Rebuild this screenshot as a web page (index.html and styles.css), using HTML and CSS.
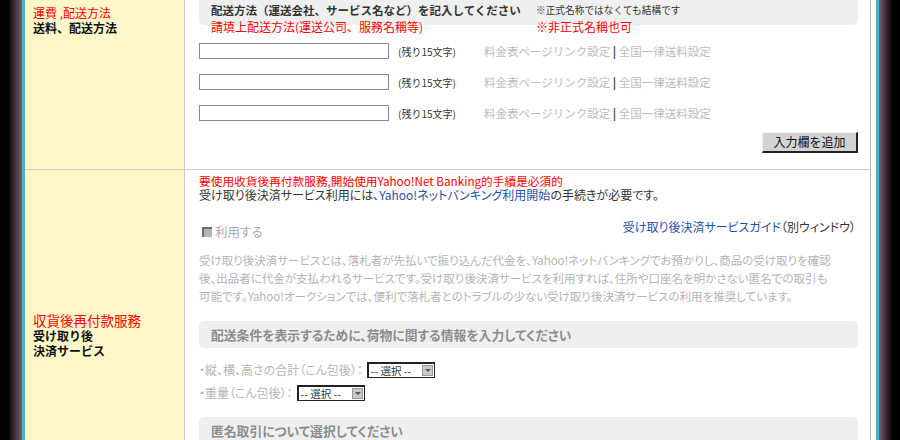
FILE: index.html
```html
<!DOCTYPE html>
<html lang="ja">
<head>
<meta charset="utf-8">
<link rel="stylesheet" href="styles.css">
</head>
<body>
<div class="edge-l"></div>
<div class="cyan"></div>
<div class="main">
  <div class="row row1">
    <div class="label l1">
      <div class="red">運費 ,配送方法</div>
      <div class="bold">送料、配送方法</div>
    </div>
    <div class="content c1">
      <div class="hdr">
        <span class="hdr-title">配送方法（運送会社、サービス名など）を記入してください</span>
        <span class="hdr-note">※正式名称ではなくても結構です</span>
      </div>
      <div class="anno">
        <span class="anno-a">請填上配送方法(運送公司、服務名稱等)</span>
        <span class="anno-b">※非正式名稱也可</span>
      </div>
      <div class="inputs">
        <div class="in-row"><span class="field"></span><span class="remain">(残り15文字)</span><span class="links">料金表ページリンク設定 <b class="sep">|</b> 全国一律送料設定</span></div>
        <div class="in-row"><span class="field"></span><span class="remain">(残り15文字)</span><span class="links">料金表ページリンク設定 <b class="sep">|</b> 全国一律送料設定</span></div>
        <div class="in-row"><span class="field"></span><span class="remain">(残り15文字)</span><span class="links">料金表ページリンク設定 <b class="sep">|</b> 全国一律送料設定</span></div>
      </div>
      <div class="btn-row"><span class="btn">入力欄を追加</span></div>
    </div>
  </div>
  <div class="row row2">
    <div class="label l2">
      <div class="red big">収貨後再付款服務</div>
      <div class="bold">受け取り後</div>
      <div class="bold">決済サービス</div>
    </div>
    <div class="content c2">
      <div class="red r2">要使用收貨後再付款服務,開始使用Yahoo!Net Banking的手續是必須的</div>
      <div class="dark">受け取り後決済サービス利用には、<span class="blue">Yahoo!ネットバンキング利用開始</span>の手続きが必要です。</div>
      <div class="use-row">
        <span class="use"><span class="cb"></span>利用する</span>
        <span class="guide"><span class="blue">受け取り後決済サービスガイド</span>（別ウィンドウ）</span>
      </div>
      <p class="desc">受け取り後決済サービスとは、落札者が先払いで振り込んだ代金を、Yahoo!ネットバンキングでお預かりし、商品の受け取りを確認<br>後、出品者に代金が支払われるサービスです。受け取り後決済サービスを利用すれば、住所や口座名を明かさない匿名での取引も<br>可能です。Yahoo!オークションでは、便利で落札者とのトラブルの少ない受け取り後決済サービスの利用を推奨しています。</p>
      <div class="box">配送条件を表示するために、荷物に関する情報を入力してください</div>
      <div class="sel-row first">・縦、横、高さの合計（こん包後）：<span class="sel"><span class="sel-t">-- 選択 --</span><span class="arrow"></span></span></div>
      <div class="sel-row">・重量（こん包後）：<span class="sel"><span class="sel-t">-- 選択 --</span><span class="arrow"></span></span></div>
      <div class="box box3">匿名取引について選択してください</div>
    </div>
  </div>
</div>
<div class="gap"></div>
<div class="cyan"></div>
<div class="edge-r"></div>
</body>
</html>
```

FILE: styles.css
```css
html, body {
  margin: 0;
  padding: 0;
}
body {
  width: 900px;
  height: 440px;
  overflow: hidden;
  display: flex;
  background: #fff;
  font-family: "Noto Sans CJK JP", "Liberation Sans", sans-serif;
  font-size: 12px;
  color: #333;
}
.edge-l {
  width: 22px;
  flex: none;
  background: linear-gradient(to right, #000 0, #000 8px, #3a2a34 14px, #7a5c70 22px);
}
.cyan {
  width: 3px;
  flex: none;
  background: #4cb4c4;
}
.gap {
  width: 5px;
  flex: none;
  background: #fff;
}
.edge-r {
  flex: 1;
  background: linear-gradient(to right, #7a5c70 0, #3a2a34 7px, #000 14px, #000 100%);
}
.main {
  width: 845px;
  flex: none;
  border-right: 1px solid #b8b8b8;
  display: flex;
  flex-direction: column;
  overflow: hidden;
}
.row {
  display: grid;
  grid-template-columns: 160px 1fr;
}
.row1 {
  flex: none;
  height: 169px;
  border-bottom: 1px solid #cfcfcf;
}
.row2 {
  flex: 1 0 auto;
}
.label {
  background: #fef7ca;
  border-right: 1px solid #cfcfcf;
  padding-left: 8px;
  line-height: 15px;
}
.l1 { padding-top: 5px; }
.l2 { padding-top: 142px; }
.red { color: #ff0000; }
.big { font-size: 13.5px; line-height: 16px; font-feature-settings: "palt"; }
.bold { font-weight: bold; color: #111; }
.content {
  padding: 0 12px 0 14px;
  min-width: 0;
}
.hdr {
  margin-top: -5px;
  height: 30px;
  box-sizing: border-box;
  padding: 7px 0 0 12px;
  background: #efefef;
  border-radius: 5px;
  display: flex;
  line-height: 16px;
}
.hdr-title {
  width: 325px;
  flex: none;
  font-size: 11.5px;
  font-weight: bold;
  color: #333;
}
.hdr-note {
  font-size: 9.7px;
  color: #333;
}
.anno {
  margin-top: -5px;
  padding-left: 12px;
  display: flex;
  line-height: 14px;
  color: #ff0000;
}
.anno-a { width: 325px; flex: none; font-size: 12px; }
.anno-b { font-size: 12px; }
.inputs {
  margin-top: 9px;
  display: flex;
  flex-direction: column;
  gap: 15px;
}
.in-row {
  display: flex;
  align-items: center;
  height: 16px;
}
.field {
  width: 190px;
  height: 16px;
  box-sizing: border-box;
  border: 1px solid #8a8a8a;
  background: #fff;
  flex: none;
}
.remain {
  margin-left: 9px;
  width: 86px;
  flex: none;
  font-size: 10px;
  color: #333;
}
.links {
  color: #bcbcbc;
  font-size: 11.5px;
  white-space: nowrap;
}
.sep { color: #444; font-weight: bold; }
.btn-row {
  margin-top: 11px;
  display: flex;
  justify-content: flex-end;
}
.btn {
  width: 96px;
  height: 21px;
  box-sizing: border-box;
  background: #d3d3d3;
  border: 1px solid #f2f2f2;
  border-right: 2px solid #222;
  border-bottom: 2px solid #222;
  text-align: center;
  line-height: 18px;
  font-size: 12px;
  color: #111;
}
.c2 {
  padding-top: 4px;
  line-height: 14px;
  font-feature-settings: "palt";
}
.r2 { font-size: 11.7px; line-height: 14px; }
.dark { color: #333; }
.blue { color: #1f4fa8; }
.use-row {
  margin-top: 18px;
  display: flex;
  justify-content: space-between;
  align-items: flex-start;
}
.use {
  margin-top: 5px;
  margin-left: 3px;
  display: flex;
  align-items: center;
  color: #aaa;
  font-size: 12.5px;
}
.cb {
  width: 10px;
  height: 10px;
  box-sizing: border-box;
  background: #b5b5b5;
  border-top: 2px solid #6e6e6e;
  border-left: 2px solid #6e6e6e;
  margin-right: 3px;
}
.guide { color: #333; margin-right: 2px; }
.desc {
  margin: 12px 0 0;
  font-size: 11.5px;
  color: #b4b4b4;
  line-height: 18px;
  white-space: nowrap;
}
.box {
  margin-top: 16px;
  height: 27px;
  box-sizing: border-box;
  background: #efefef;
  border-radius: 5px;
  padding-left: 12px;
  line-height: 27px;
  font-size: 12.8px;
  font-weight: bold;
  color: #8c8c8c;
}
.sel-row {
  margin-top: 7px;
  height: 16px;
  display: flex;
  align-items: center;
  color: #b4b4b4;
}
.sel-row.first { margin-top: 14px; }
.sel {
  margin-left: 4px;
  width: 68px;
  height: 16px;
  box-sizing: border-box;
  border: 1px solid #222;
  border-top-width: 2px;
  border-left-width: 2px;
  background: #fff;
  display: flex;
  align-items: center;
  justify-content: space-between;
  padding: 0 1px 0 2px;
}
.sel-t { font-size: 10.5px; color: #333; line-height: 12px; white-space: pre; }
.arrow {
  width: 11px;
  height: 11px;
  box-sizing: border-box;
  background: #c8c8c8;
  border: 1px solid #999;
  position: relative;
}
.arrow::after {
  content: "";
  position: absolute;
  left: 2px;
  top: 3px;
  border-left: 3px solid transparent;
  border-right: 3px solid transparent;
  border-top: 3px solid #555;
}
.box3 { margin-top: 16px; height: 30px; line-height: 28px; }
```
